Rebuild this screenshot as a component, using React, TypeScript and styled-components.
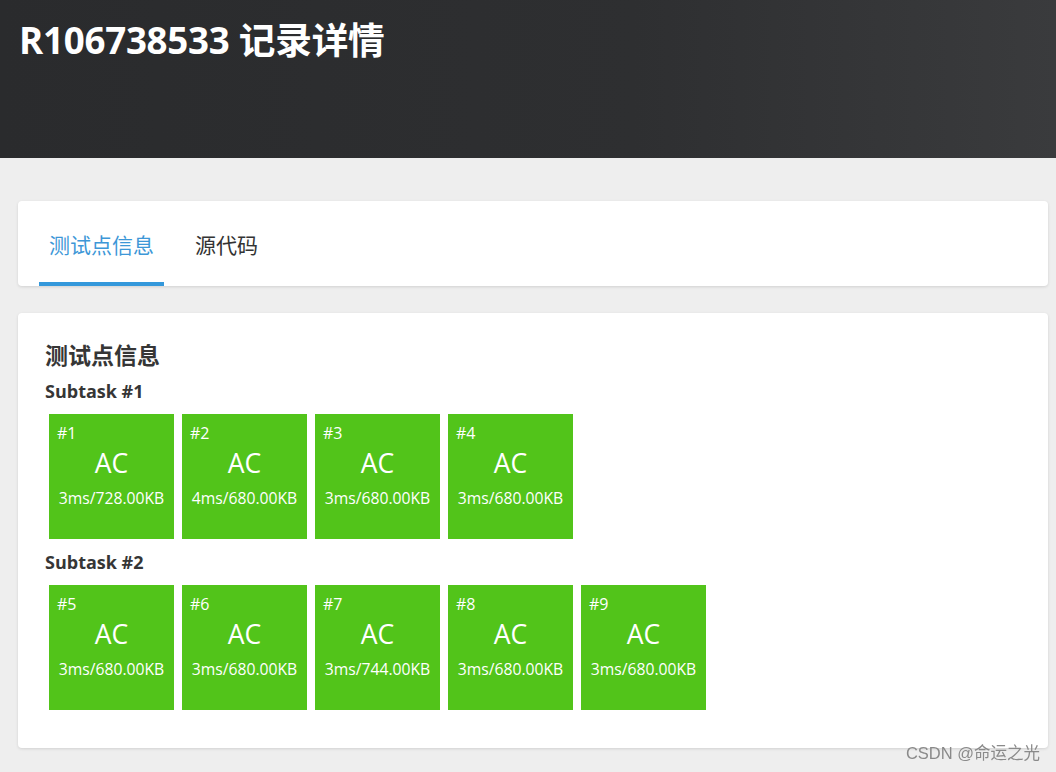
import React from "react";
import styled, { createGlobalStyle } from "styled-components";

const Global = createGlobalStyle`
  html, body { margin: 0; padding: 0; }
  body {
    background: #eeeeee;
    font-family: "Open Sans", "Noto Sans CJK SC", sans-serif;
    color: #333;
    width: 1056px;
    height: 772px;
    overflow: hidden;
  }
`;

const Header = styled.header`
  height: 158px;
  box-sizing: border-box;
  padding: 16px 0 0 19px;
  background: linear-gradient(90deg, #2a2b2d 0%, #2e2f31 60%, #3a3b3d 100%);
`;

const Title = styled.h1`
  margin: 0;
  font-size: 36.7px;
  line-height: 48px;
  font-weight: 700;
  color: #fff;
  letter-spacing: -0.25px;
`;

const Main = styled.main`
  padding: 43px 8px 0 18px;
  display: flex;
  flex-direction: column;
  gap: 27px;
`;

const Card = styled.section`
  background: #fff;
  border-radius: 4px;
  box-shadow: 0 1px 3px rgba(0, 0, 0, 0.12);
`;

const TabBar = styled.nav`
  height: 85px;
  display: flex;
  align-items: stretch;
  padding-left: 21px;
  gap: 21px;
`;

const Tab = styled.div<{ $active?: boolean }>`
  display: flex;
  align-items: center;
  padding: 4px 10px 0;
  font-size: 21px;
  color: ${(p) => (p.$active ? "#3d97d7" : "#333")};
  border-bottom: 4px solid ${(p) => (p.$active ? "#3498db" : "transparent")};
  box-sizing: border-box;
`;

const Body = styled.div`
  padding: 27px 27px 27px 27px;
`;

const Heading = styled.h2`
  margin: 0 0 9px;
  font-size: 23px;
  line-height: 30px;
  font-weight: 700;
  color: #363636;
`;

const SubTitle = styled.h3`
  margin: 0 0 11px;
  font-size: 18px;
  line-height: 24px;
  font-weight: 700;
  color: #363636;
`;

const Tiles = styled.div`
  display: flex;
  flex-wrap: wrap;
  margin-bottom: 11px;
`;

const Tile = styled.div`
  width: 125px;
  height: 125px;
  margin: 0 4px;
  box-sizing: border-box;
  background: #52c41a;
  color: #fff;
  display: flex;
  flex-direction: column;
  padding: 8px 8px 0;
`;

const TileId = styled.div`
  font-size: 16px;
  line-height: 22px;
`;

const TileStatus = styled.div`
  text-align: center;
  font-size: 26.5px;
  line-height: 32px;
  margin-top: 3px;
`;

const TileInfo = styled.div`
  text-align: center;
  font-size: 15.7px;
  line-height: 22px;
  margin-top: 8px;
  white-space: nowrap;
  margin-left: -8px;
  margin-right: -8px;
`;

const Watermark = styled.div`
  position: fixed;
  right: 16px;
  bottom: 8px;
  font-family: "Liberation Sans", "Noto Sans CJK SC", sans-serif;
  font-size: 16.5px;
  color: #8a8a8a;
`;

type Case = { id: number; info: string };

const subtasks: { name: string; cases: Case[] }[] = [
  {
    name: "Subtask #1",
    cases: [
      { id: 1, info: "3ms/728.00KB" },
      { id: 2, info: "4ms/680.00KB" },
      { id: 3, info: "3ms/680.00KB" },
      { id: 4, info: "3ms/680.00KB" },
    ],
  },
  {
    name: "Subtask #2",
    cases: [
      { id: 5, info: "3ms/680.00KB" },
      { id: 6, info: "3ms/680.00KB" },
      { id: 7, info: "3ms/744.00KB" },
      { id: 8, info: "3ms/680.00KB" },
      { id: 9, info: "3ms/680.00KB" },
    ],
  },
];

export default function App() {
  return (
    <>
      <Global />
      <Header>
        <Title>R106738533 记录详情</Title>
      </Header>
      <Main>
        <Card>
          <TabBar>
            <Tab $active>测试点信息</Tab>
            <Tab>源代码</Tab>
          </TabBar>
        </Card>
        <Card>
          <Body>
            <Heading>测试点信息</Heading>
            {subtasks.map((s) => (
              <div key={s.name}>
                <SubTitle>{s.name}</SubTitle>
                <Tiles>
                  {s.cases.map((c) => (
                    <Tile key={c.id}>
                      <TileId>#{c.id}</TileId>
                      <TileStatus>AC</TileStatus>
                      <TileInfo>{c.info}</TileInfo>
                    </Tile>
                  ))}
                </Tiles>
              </div>
            ))}
          </Body>
        </Card>
      </Main>
      <Watermark>CSDN @命运之光</Watermark>
    </>
  );
}
